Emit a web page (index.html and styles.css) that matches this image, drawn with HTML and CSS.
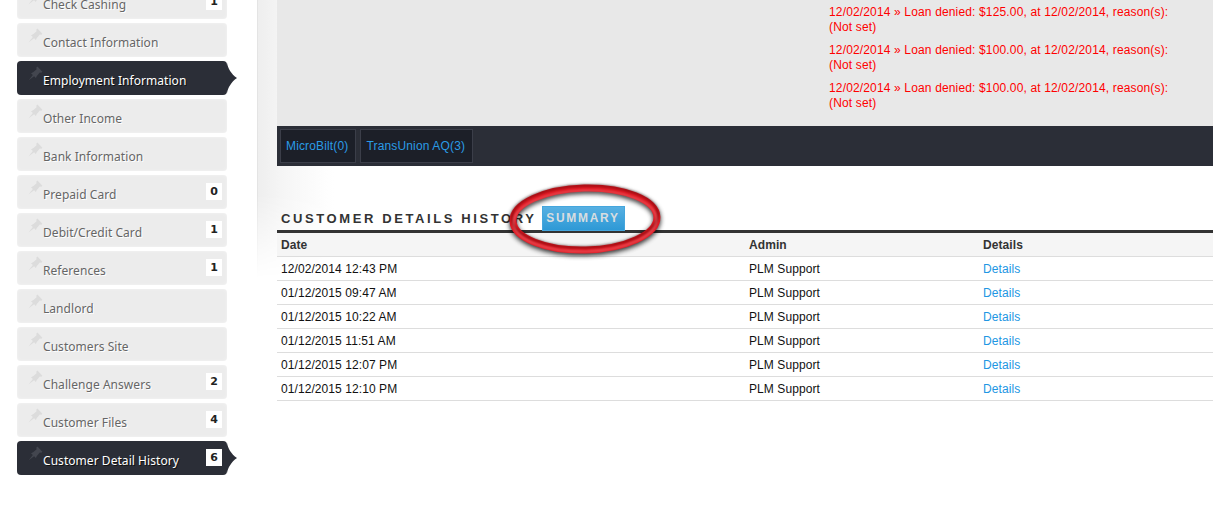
FILE: index.html
```html
<!DOCTYPE html>
<html lang="en">
<head>
<meta charset="utf-8">
<title>Customer Detail History</title>
<link rel="stylesheet" href="styles.css">
</head>
<body>
<svg class="defs" width="0" height="0" aria-hidden="true">
  <symbol id="pin" viewBox="0 0 16 16">
    <path d="M0.5 15.5 L6 8.5 L7.5 10 Z"/>
    <path d="M3.2 7.6 L5.4 6.6 L9.2 3.4 L8.8 1.8 L10 0.6 L15.4 6 L14.2 7.2 L12.6 6.8 L9.4 10.6 L8.4 12.8 Z"/>
  </symbol>
</svg>
<div class="page">
  <nav class="side">
    <a class="item"><svg class="pin"><use href="#pin"/></svg><span class="label">Check Cashing</span><b class="badge">1</b></a>
    <a class="item"><svg class="pin"><use href="#pin"/></svg><span class="label">Contact Information</span></a>
    <a class="item active"><svg class="pin"><use href="#pin"/></svg><span class="label">Employment Information</span></a>
    <a class="item"><svg class="pin"><use href="#pin"/></svg><span class="label">Other Income</span></a>
    <a class="item"><svg class="pin"><use href="#pin"/></svg><span class="label">Bank Information</span></a>
    <a class="item"><svg class="pin"><use href="#pin"/></svg><span class="label">Prepaid Card</span><b class="badge">0</b></a>
    <a class="item"><svg class="pin"><use href="#pin"/></svg><span class="label">Debit/Credit Card</span><b class="badge">1</b></a>
    <a class="item"><svg class="pin"><use href="#pin"/></svg><span class="label">References</span><b class="badge">1</b></a>
    <a class="item"><svg class="pin"><use href="#pin"/></svg><span class="label">Landlord</span></a>
    <a class="item"><svg class="pin"><use href="#pin"/></svg><span class="label">Customers Site</span></a>
    <a class="item"><svg class="pin"><use href="#pin"/></svg><span class="label">Challenge Answers</span><b class="badge">2</b></a>
    <a class="item"><svg class="pin"><use href="#pin"/></svg><span class="label">Customer Files</span><b class="badge">4</b></a>
    <a class="item active"><svg class="pin"><use href="#pin"/></svg><span class="label">Customer Detail History</span><b class="badge">6</b></a>
  </nav>
  <main class="main">
    <section class="notes">
      <p>12/02/2014 » Loan denied: $125.00, at 12/02/2014, reason(s): (Not set)</p>
      <p>12/02/2014 » Loan denied: $100.00, at 12/02/2014, reason(s): (Not set)</p>
      <p>12/02/2014 » Loan denied: $100.00, at 12/02/2014, reason(s): (Not set)</p>
    </section>
    <div class="tabs">
      <a class="tab">MicroBilt(0)</a>
      <a class="tab">TransUnion AQ(3)</a>
    </div>
    <div class="heading">
      <h2 class="title">CUSTOMER DETAILS HISTORY</h2>
      <a class="summary">SUMMARY</a>
    </div>
    <table class="history">
      <thead>
        <tr><th class="c-date">Date</th><th class="c-admin">Admin</th><th>Details</th></tr>
      </thead>
      <tbody>
        <tr><td>12/02/2014 12:43 PM</td><td>PLM Support</td><td><a>Details</a></td></tr>
        <tr><td>01/12/2015 09:47 AM</td><td>PLM Support</td><td><a>Details</a></td></tr>
        <tr><td>01/12/2015 10:22 AM</td><td>PLM Support</td><td><a>Details</a></td></tr>
        <tr><td>01/12/2015 11:51 AM</td><td>PLM Support</td><td><a>Details</a></td></tr>
        <tr><td>01/12/2015 12:07 PM</td><td>PLM Support</td><td><a>Details</a></td></tr>
        <tr><td>01/12/2015 12:10 PM</td><td>PLM Support</td><td><a>Details</a></td></tr>
      </tbody>
    </table>
  </main>
  <svg class="circle" width="170" height="90" viewBox="0 0 170 90" aria-hidden="true">
    <defs>
      <filter id="soft" x="-20%" y="-30%" width="140%" height="160%"><feGaussianBlur stdDeviation="2.6"/></filter>
      <filter id="softer" x="-20%" y="-30%" width="140%" height="160%"><feGaussianBlur stdDeviation="0.8"/></filter>
    </defs>
    <g transform="rotate(-1.5 85 45)">
      <ellipse class="c-shadow" cx="85" cy="46" rx="72" ry="31" filter="url(#soft)"/>
      <ellipse class="c-red" cx="85" cy="44" rx="72" ry="31"/>
      <ellipse class="c-dark" cx="85" cy="41.5" rx="73" ry="31" filter="url(#softer)"/>
      <ellipse class="c-light" cx="85" cy="46" rx="71.5" ry="30.5" filter="url(#softer)"/>
    </g>
  </svg>
</div>
</body>
</html>
```

FILE: styles.css
```css
html, body {
  margin: 0;
  padding: 0;
  background: #fff;
}

.defs {
  display: block;
  height: 0;
}

.page {
  position: relative;
  display: flex;
  height: 512px;
  overflow: hidden;
}

/* soft shading to the right of the sidebar */
.page::before {
  content: "";
  position: absolute;
  left: 257px;
  top: 0;
  width: 76px;
  height: 278px;
  border-left: 1px solid #e4e4e4;
  background: linear-gradient(90deg, #eeeeee 0%, #f6f6f6 35%, #ffffff 100%);
  -webkit-mask-image: linear-gradient(180deg, #000 70%, transparent 100%);
  mask-image: linear-gradient(180deg, #000 70%, transparent 100%);
}

.side {
  position: relative;
  flex: 0 0 210px;
  display: flex;
  flex-direction: column;
  gap: 4px;
  margin: -15px 50px 0 17px;
  font-family: "Noto Sans", "Open Sans", sans-serif;
  font-size: 12px;
  letter-spacing: 0.05px;
}

.item {
  position: relative;
  box-sizing: border-box;
  display: flex;
  align-items: center;
  height: 34px;
  padding: 5px 5px 0 11px;
  border-radius: 4px;
  background: #ececec;
  box-shadow: inset 0 0 3px #f4f4f4;
  color: #666;
  text-shadow: 1px 1px 0 #fff;
}

.pin {
  flex: none;
  width: 15px;
  height: 15px;
  margin: -14px 0 0 0;
  fill: #dcdcdc;
}

.label {
  flex: 1;
  line-height: 18px;
}

.badge {
  flex: none;
  box-sizing: border-box;
  width: 16px;
  height: 17px;
  margin: -7px 0 0;
  background: #fff;
  color: #222;
  font: bold 11px/17px "DejaVu Sans", sans-serif;
  letter-spacing: 0;
  text-align: center;
  text-shadow: none;
}

.item.active {
  background: #2b2e37;
  box-shadow: none;
  color: #fff;
  text-shadow: 1px 1px 0 #111;
}

.item.active .pin {
  fill: #43464f;
}

.item.active::after {
  content: "";
  position: absolute;
  left: 210px;
  top: 0;
  width: 10px;
  height: 34px;
  background: #2b2e37;
  clip-path: path("M0 2 C1 7 4 13 10 17 C4 21 1 27 0 32 Z");
}

.main {
  position: relative;
  flex: 0 0 936px;
  margin: 0;
  font-family: "Liberation Sans", Arial, sans-serif;
  font-size: 12px;
  color: #111;
}

.notes {
  box-sizing: border-box;
  height: 126px;
  padding: 5px 0 0 552px;
  background: #e8e8e8;
  color: #f00;
  line-height: 15px;
  letter-spacing: 0.15px;
}

.notes p {
  width: 345px;
  margin: 0 0 8px;
}

.tabs {
  box-sizing: border-box;
  display: flex;
  gap: 4px;
  height: 40px;
  padding: 3px;
  background: #2b2e37;
  letter-spacing: 0.15px;
}

.tab {
  box-sizing: border-box;
  height: 34px;
  padding: 0 7px 0 5px;
  border: 1px solid #3b3e49;
  background: #1c1f28;
  color: #2a9be6;
  line-height: 32px;
}

.heading {
  display: flex;
  align-items: center;
  height: 24px;
  margin-top: 40px;
  padding-left: 4px;
}

.title {
  margin: 0 5px 0 0;
  color: #333;
  font-size: 13px;
  font-weight: bold;
  letter-spacing: 2.6px;
}

.summary {
  box-sizing: border-box;
  width: 83px;
  height: 25px;
  background: linear-gradient(180deg, #57b0e2 0%, #2e99d6 100%);
  border: 1px solid #45a6dd;
  color: #d8dde0;
  font-weight: bold;
  letter-spacing: 1.7px;
  line-height: 23px;
  text-align: center;
}

.history {
  width: 936px;
  border-collapse: collapse;
  table-layout: fixed;
  border-top: 3px solid #333;
  letter-spacing: 0.08px;
}

.c-date {
  width: 468px;
}

.c-admin {
  width: 234px;
}

.history th,
.history td {
  box-sizing: border-box;
  height: 24px;
  padding: 0 4px;
  border-bottom: 1px solid #ddd;
  text-align: left;
}

.history th {
  height: 25px;
  background: #f5f5f5;
  color: #333;
}

.history td a {
  color: #2196e3;
}

.circle {
  position: absolute;
  left: 500px;
  top: 175px;
  fill: none;
}

.c-shadow {
  stroke: #000;
  stroke-width: 7;
  opacity: 0.85;
}

.c-red {
  stroke: #e01822;
  stroke-width: 7;
}

.c-dark {
  stroke: #4a0508;
  stroke-width: 1.6;
  opacity: 0.7;
}

.c-light {
  stroke: #f6a0a4;
  stroke-width: 1.2;
  opacity: 0.7;
}
```
